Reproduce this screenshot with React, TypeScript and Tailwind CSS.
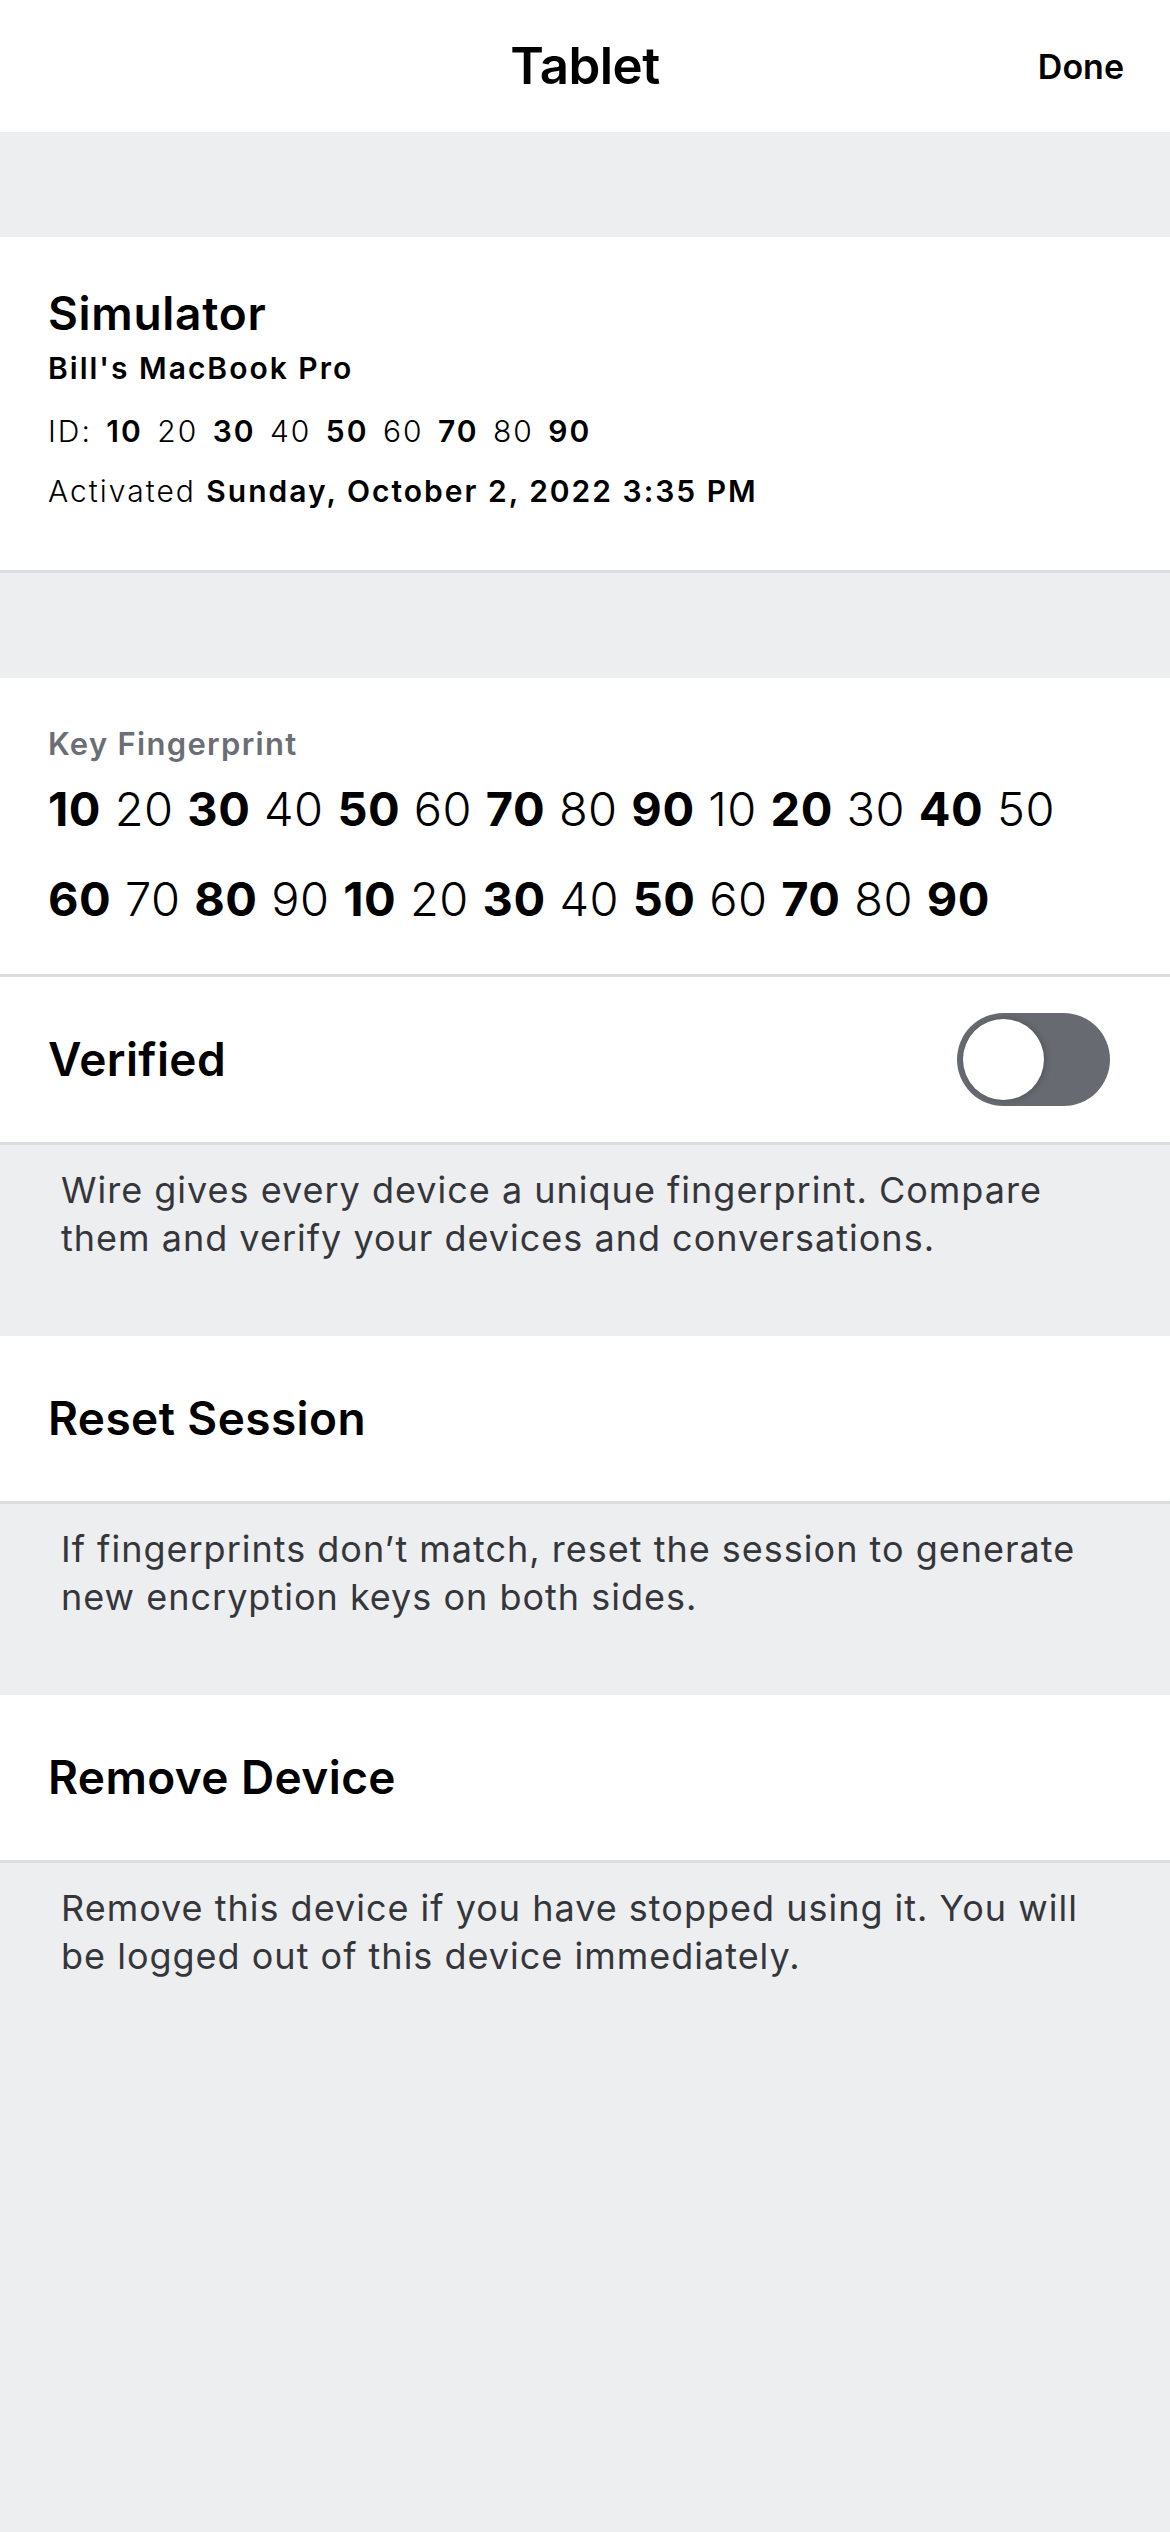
import { useState } from 'react'

const idParts = ['10', '20', '30', '40', '50', '60', '70', '80', '90']
const fingerprint = [
  '10', '20', '30', '40', '50', '60', '70', '80', '90', '10', '20', '30', '40', '50',
  '60', '70', '80', '90', '10', '20', '30', '40', '50', '60', '70', '80', '90',
]

function Alternating({ parts, boldClass, lightClass }: { parts: string[]; boldClass: string; lightClass: string }) {
  return (
    <>
      {parts.map((p, i) => (
        <span key={i}>
          <span className={i % 2 === 0 ? boldClass : lightClass}>{p}</span>
          {i < parts.length - 1 ? ' ' : ''}
        </span>
      ))}
    </>
  )
}

function Footer({ children }: { children: React.ReactNode }) {
  return (
    <p className="pl-[61px] pr-[79px] pt-[21px] pb-[74px] text-[36px] leading-[48px] tracking-[1px] text-[#35363b]">
      {children}
    </p>
  )
}

function ActionRow({ label, children }: { label: string; children?: React.ReactNode }) {
  return (
    <div className="h-[168px] bg-white border-b-[3px] border-[#dcdde0] pl-[48px] pr-[60px] flex items-center justify-between">
      <span className="text-[46px] font-semibold text-black tracking-[0.4px]">{label}</span>
      {children}
    </div>
  )
}

export default function App() {
  const [verified, setVerified] = useState(false)

  return (
    <div className="min-h-screen bg-[#edeef0] font-['Inter',sans-serif] text-black">
      {/* Nav bar */}
      <header className="h-[132px] bg-white grid grid-cols-[1fr_auto_1fr] items-center">
        <span />
        <h1 className="text-[51px] font-semibold tracking-[-0.5px]">Tablet</h1>
        <button className="justify-self-end pr-[46px] text-[34px] font-semibold">Done</button>
      </header>

      <div className="h-[105px]" />

      {/* Device info */}
      <section className="bg-white border-b-[3px] border-[#dcdde0] pl-[48px] pt-[48px] pb-[59px] flex flex-col">
        <h2 className="text-[46px] leading-[56px] font-semibold tracking-[0.7px]">Simulator</h2>
        <div className="mt-[7px] text-[30px] leading-[40px] font-semibold tracking-[2px]">Bill's MacBook Pro</div>
        <div className="mt-[23px] text-[30px] leading-[40px] font-light tracking-[2px] [word-spacing:4px]">
          ID: <Alternating parts={idParts} boldClass="font-semibold" lightClass="font-light" />
        </div>
        <div className="mt-[20px] text-[30px] leading-[40px] font-light tracking-[2px]">
          Activated <span className="font-semibold">Sunday, October 2, 2022 3:35 PM</span>
        </div>
      </section>

      <div className="h-[105px]" />

      {/* Fingerprint */}
      <section className="bg-white border-b-[3px] border-[#dcdde0] pl-[48px] pr-[40px] pt-[46px] pb-[30px]">
        <div className="text-[31px] leading-[40px] font-semibold tracking-[1.3px] text-[#6b6e75]">Key Fingerprint</div>
        <p className="text-[47px] leading-[90px] tracking-[0.5px] max-w-[1030px]">
          <Alternating parts={fingerprint} boldClass="font-bold" lightClass="font-light" />
        </p>
      </section>

      <ActionRow label="Verified">
        <button
          onClick={() => setVerified(!verified)}
          className="relative w-[153px] h-[93px] rounded-full bg-[#676a70]"
          aria-label="Verified"
        >
          <span
            className={`absolute top-[6px] w-[81px] h-[81px] rounded-full bg-white shadow-[2px_0_6px_rgba(0,0,0,0.2)] transition-all ${
              verified ? 'left-[66px]' : 'left-[6px]'
            }`}
          />
        </button>
      </ActionRow>
      <Footer>Wire gives every device a unique fingerprint. Compare them and verify your devices and conversations.</Footer>

      <ActionRow label="Reset Session" />
      <Footer>If fingerprints don’t match, reset the session to generate new encryption keys on both sides.</Footer>

      <ActionRow label="Remove Device" />
      <Footer>Remove this device if you have stopped using it. You will be logged out of this device immediately.</Footer>
    </div>
  )
}
